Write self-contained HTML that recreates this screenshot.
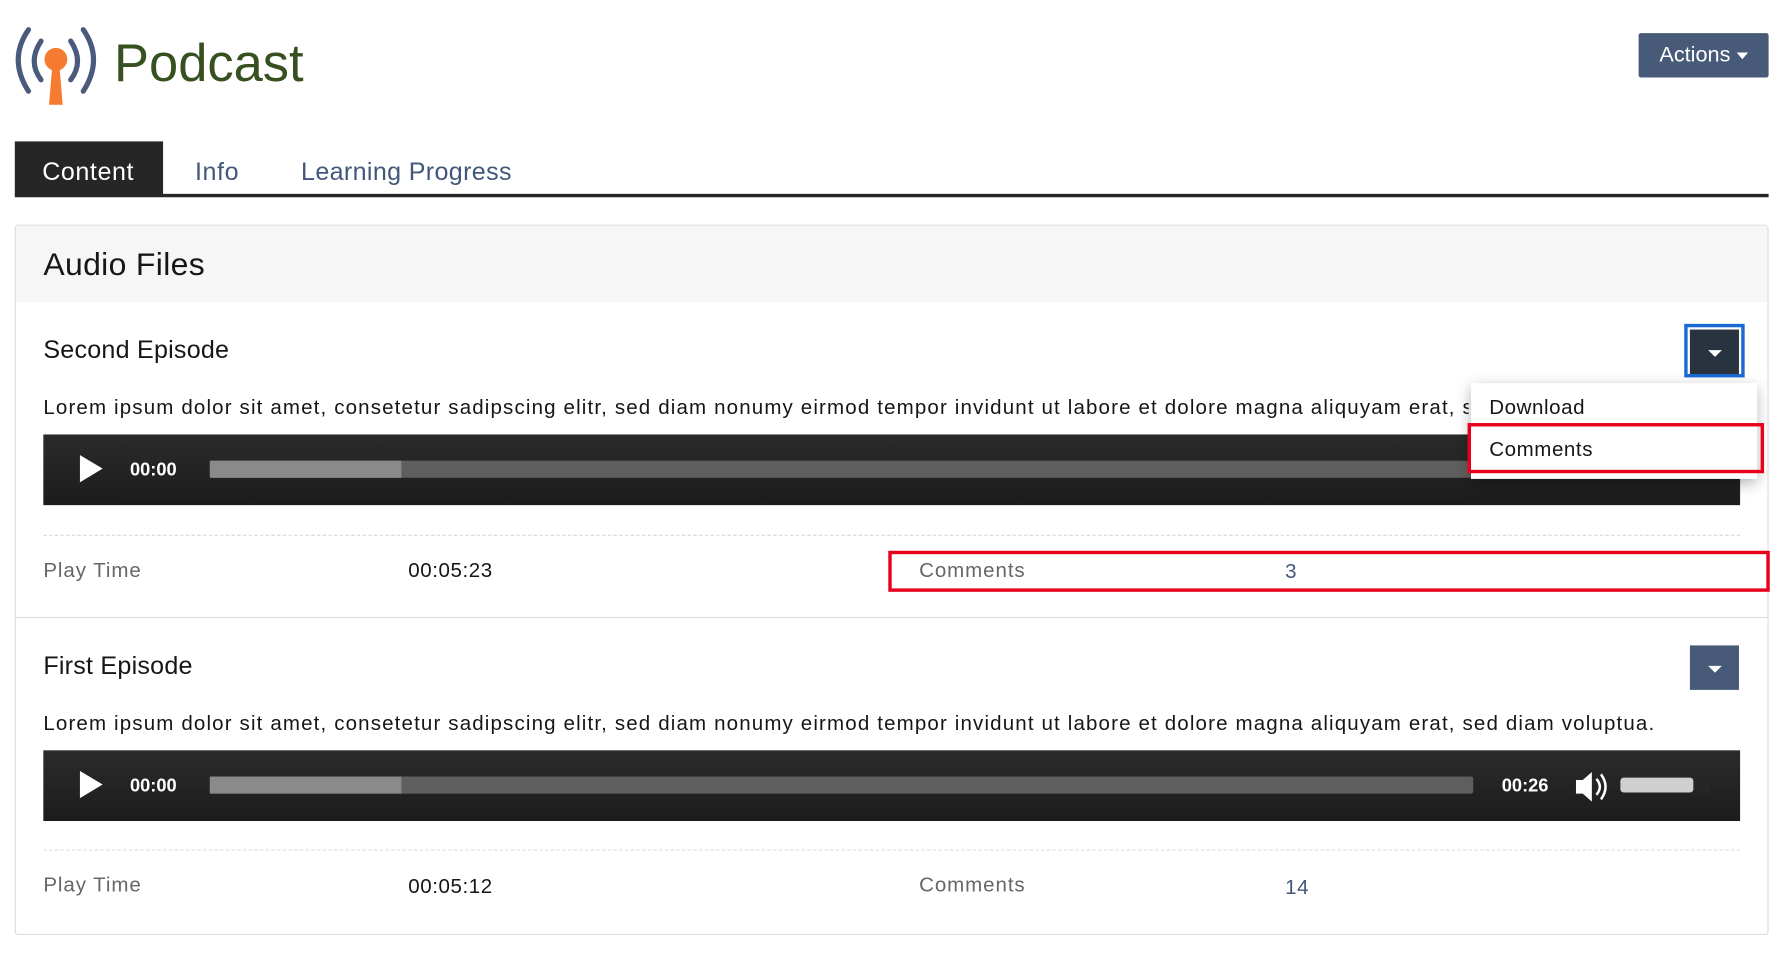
<!DOCTYPE html>
<html><head><meta charset="utf-8"><style>
html,body{margin:0;padding:0;background:#fff;width:1788px;height:962px;overflow:hidden}
#w{position:absolute;left:0;top:0;width:1568px;height:844px;transform:scale(1.1403);transform-origin:0 0;font-family:"Liberation Sans",sans-serif;color:#161616}
.a{position:absolute;white-space:nowrap}
.player{position:absolute;left:38px;width:1488px;height:62px;background:linear-gradient(#2b2b2b,#1c1c1c)}
.player .t{position:absolute;color:#fff;font-weight:bold;font-size:16px;top:23px}
.bar{position:absolute;left:146px;top:23px;width:1108px;height:15px;background:#5e5e5e;border-radius:2px}
.bar i{position:absolute;left:0;top:0;height:15px;width:168px;background:#8a8a8a}
.lbl{color:#666;font-size:18px;letter-spacing:.8px}
.v{font-size:18px;letter-spacing:.5px}
.lorem{font-size:18px;letter-spacing:1px}
.dash{position:absolute;left:38px;width:1488px;border-top:1px dashed #ddd}
</style></head><body><div id="w">
<svg class="a" style="left:13px;top:22px" width="72" height="70" viewBox="0 0 72 70">
<g fill="none" stroke="#4a5a7d" stroke-width="4.5" stroke-linecap="round">
<path d="M12 4 Q-6 30 12 58"/><path d="M60 4 Q78 30 60 58"/>
<path d="M23 14 Q11 32 23 48"/><path d="M49 14 Q61 32 49 48"/></g>
<circle cx="36" cy="30" r="10" fill="#f47b30"/><path d="M33 34 L39 34 L42 70 L30 70 Z" fill="#f47b30"/></svg>
<div class="a" style="left:100px;top:28px;font-size:46px;color:#36501f">Podcast</div>
<div class="a" style="left:1437px;top:29px;width:114px;height:39px;background:#475b79;color:#fff;font-size:19px;line-height:39px;text-align:center;border-radius:2px">Actions <span style="display:inline-block;border:5px solid transparent;border-top:6px solid #fff;border-bottom:0;vertical-align:middle"></span></div>
<div class="a" style="left:13px;top:124px;width:130px;height:47px;background:#262626"></div>
<div class="a" style="left:37px;top:138px;font-size:22px;color:#fff;letter-spacing:.5px">Content</div>
<div class="a" style="left:171px;top:138px;font-size:22px;color:#41587a;letter-spacing:.5px">Info</div>
<div class="a" style="left:264px;top:138px;font-size:22px;color:#41587a;letter-spacing:.3px">Learning Progress</div>
<div class="a" style="left:13px;top:170px;width:1538px;height:3px;background:#262626"></div>
<div class="a" style="left:13px;top:197px;width:1536px;height:621px;border:1px solid #ddd;border-radius:3px"></div>
<div class="a" style="left:14px;top:198px;width:1536px;height:67px;background:#f6f6f6"></div>
<div class="a" style="left:38px;top:216px;font-size:28px;letter-spacing:.3px">Audio Files</div>
<div class="a" style="left:38px;top:294px;font-size:22px;letter-spacing:.2px">Second Episode</div>
<div class="a" style="left:1477px;top:284px;width:47px;height:41px;border:3px solid #1a6ad4;background:#fff"></div>
<div class="a" style="left:1482px;top:289px;width:43px;height:39px;background:#29323f"></div>
<div class="a" style="left:1498px;top:307px;border:6px solid transparent;border-top:6px solid #fff;border-bottom:0"></div>
<div class="a lorem" style="left:38px;top:347px;width:1250px;overflow:hidden">Lorem ipsum dolor sit amet, consetetur sadipscing elitr, sed diam nonumy eirmod tempor invidunt ut labore et dolore magna aliquyam erat, sed diam voluptua.</div>
<div class="player" style="top:381px"><svg class="a" style="left:32px;top:18px" width="20" height="24"><path d="M0 0L20 12L0 24Z" fill="#fff"/></svg><span class="t" style="left:76px">00:00</span><div class="bar"><i></i></div></div>
<div class="dash" style="top:469px"></div>
<div class="a lbl" style="left:38px;top:490px">Play Time</div>
<div class="a v" style="left:358px;top:490px">00:05:23</div>
<div class="a lbl" style="left:806px;top:490px">Comments</div>
<div class="a v" style="left:1127px;top:491px;color:#41587a">3</div>
<div class="a" style="left:779px;top:483px;width:767px;height:30px;border:3px solid #e8001c"></div>
<div class="a" style="left:14px;top:541px;width:1536px;height:1px;background:#ddd"></div>
<div class="a" style="left:38px;top:571px;font-size:22px;letter-spacing:.2px">First Episode</div>
<div class="a" style="left:1482px;top:566px;width:43px;height:39px;background:#465a78"></div>
<div class="a" style="left:1498px;top:584px;border:6px solid transparent;border-top:6px solid #fff;border-bottom:0"></div>
<div class="a lorem" style="left:38px;top:624px">Lorem ipsum dolor sit amet, consetetur sadipscing elitr, sed diam nonumy eirmod tempor invidunt ut labore et dolore magna aliquyam erat, sed diam voluptua.</div>
<div class="player" style="top:658px"><svg class="a" style="left:32px;top:18px" width="20" height="24"><path d="M0 0L20 12L0 24Z" fill="#fff"/></svg><span class="t" style="left:76px">00:00</span><div class="bar"><i></i></div><span class="t" style="left:1279px">00:26</span>
<svg class="a" style="left:1344px;top:17px" width="30" height="30" viewBox="0 0 30 30"><path d="M0 9H6L14 2V28L6 21H0Z" fill="#fff"/><path d="M18 8Q24 15 18 22M22 4Q30 15 22 26" fill="none" stroke="#fff" stroke-width="2.2"/></svg>
<div class="a" style="left:1383px;top:24px;width:79px;height:13px;background:#262626;border-radius:3px"></div><div class="a" style="left:1383px;top:24px;width:64px;height:13px;background:#cfcfcf;border-radius:3px"></div></div>
<div class="dash" style="top:745px"></div>
<div class="a lbl" style="left:38px;top:766px">Play Time</div>
<div class="a v" style="left:358px;top:767px">00:05:12</div>
<div class="a lbl" style="left:806px;top:766px">Comments</div>
<div class="a v" style="left:1127px;top:768px;color:#41587a">14</div>
<div class="a" style="left:1290px;top:336px;width:251px;height:84px;background:#fff;box-shadow:0 4px 12px rgba(0,0,0,.3)"></div>
<div class="a v" style="left:1306px;top:347px">Download</div>
<div class="a" style="left:1287px;top:371px;width:254px;height:38px;border:3px solid #e8001c"></div>
<div class="a v" style="left:1306px;top:384px">Comments</div>
</div></body></html>
